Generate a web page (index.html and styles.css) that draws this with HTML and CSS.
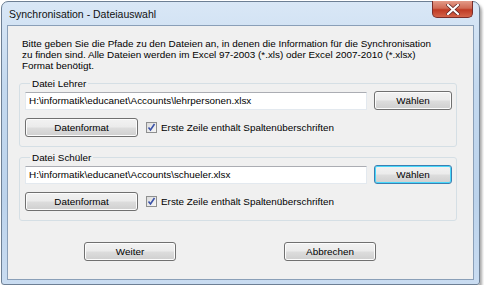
FILE: index.html
```
<!DOCTYPE html>
<html lang="de">
  <head>
    <meta charset="UTF-8">
    <link rel="stylesheet" href="styles.css">
    <title>Synchronisation - Dateiauswahl</title>
  </head>
  <body>
    <div class="window">
      <div class="titlebar">
        <span class="title">Synchronisation - Dateiauswahl</span>
        <span class="close">
          <svg width="14" height="11" viewBox="0 0 14 11">
            <path d="M2 1 L12 10 M12 1 L2 10" stroke="#5a2020" stroke-width="3.6" stroke-linecap="square"/>
            <path d="M2 1 L12 10 M12 1 L2 10" stroke="#fff" stroke-width="2.2" stroke-linecap="square"/>
          </svg>
        </span>
      </div>

      <div class="client">
        <p class="intro">
          Bitte geben Sie die Pfade zu den Dateien an, in denen die Information für die Synchronisation<br>
          zu finden sind. Alle Dateien werden im Excel 97-2003 (*.xls) oder Excel 2007-2010 (*.xlsx)<br>
          Format benötigt.
        </p>

        <fieldset class="group">
          <legend>Datei Lehrer</legend>
          <div class="row">
            <div class="field">H:\informatik\educanet\Accounts\lehrpersonen.xlsx</div>
            <button class="btn choose">Wählen</button>
          </div>
          <div class="row">
            <button class="btn format">Datenformat</button>
            <span class="check">
              <svg width="9" height="9" viewBox="0 0 9 9"><path d="M1.5 4.5 L3.5 7 L7.5 1" fill="none" stroke="#3a52a8" stroke-width="1.6"/></svg>
            </span>
            <span class="checklabel">Erste Zeile enthält Spaltenüberschriften</span>
          </div>
        </fieldset>

        <fieldset class="group second">
          <legend>Datei Schüler</legend>
          <div class="row">
            <div class="field">H:\informatik\educanet\Accounts\schueler.xlsx</div>
            <button class="btn choose focus">Wählen</button>
          </div>
          <div class="row">
            <button class="btn format">Datenformat</button>
            <span class="check">
              <svg width="9" height="9" viewBox="0 0 9 9"><path d="M1.5 4.5 L3.5 7 L7.5 1" fill="none" stroke="#3a52a8" stroke-width="1.6"/></svg>
            </span>
            <span class="checklabel">Erste Zeile enthält Spaltenüberschriften</span>
          </div>
        </fieldset>

        <div class="actions">
          <button class="btn wide">Weiter</button>
          <button class="btn wide cancel">Abbrechen</button>
        </div>
      </div>
    </div>
  </body>
</html>
```

FILE: styles.css
```
body {
  margin: 0;
  background: #fff;
  font-family: "Liberation Sans", Arial, sans-serif;
  font-size: 9.9px;
  color: #000;
}

.window {
  margin: 1px 0 0 1px;
  width: 479px;
  height: 284px;
  box-sizing: border-box;
  display: flex;
  flex-direction: column;
  padding: 0 5px 4px 5px;
  border: 1px solid #6d7f94;
  border-radius: 7px 7px 3px 3px;
  background: linear-gradient(180deg, #d9e7f6 0%, #c4d9ef 30%, #bcd3ec 70%, #c9dcf1 100%);
  box-shadow: 2px 3px 3px rgba(0, 0, 0, 0.35);
}

.titlebar {
  height: 23px;
  display: flex;
  justify-content: space-between;
  align-items: flex-start;
}

.title {
  margin: 6px 0 0 2px;
  font-size: 10.5px;
  color: #111;
}

.close {
  width: 41px;
  height: 17px;
  margin-top: -1px;
  margin-right: 1px;
  display: flex;
  align-items: center;
  justify-content: center;
  box-sizing: border-box;
  border: 1px solid #7a2d2a;
  border-top: none;
  border-radius: 0 0 5px 5px;
  background: linear-gradient(180deg, #e39a88 0%, #d06a55 45%, #bf3a24 55%, #d4644a 100%);
}

.client {
  flex: 1;
  background: #f0f0f0;
  border: 1px solid #8a9fb8;
  padding: 0 17px 0 11px;
}

.intro {
  margin: 12px 0 0 3px;
  line-height: 11px;
}

.group {
  margin: 7px 0 0 0;
  padding: 2px 4px 9px 5px;
  border: 1px solid #d5dfe5;
  border-radius: 3px;
}

.group.second {
  margin-top: 5px;
}

.group legend {
  padding: 0 2px;
  margin-left: 5px;
}

.row {
  display: flex;
  align-items: center;
}

.row + .row {
  margin-top: 8px;
}

.field {
  width: 342px;
  height: 18px;
  box-sizing: border-box;
  background: #fff;
  border: 1px solid #e3e9ef;
  border-top-color: #abadb3;
  padding: 0 3px;
  line-height: 16px;
  white-space: nowrap;
}

.btn {
  height: 19px;
  box-sizing: border-box;
  padding: 0;
  font-family: inherit;
  font-size: 9.9px;
  color: #000;
  border: 1px solid #707070;
  border-radius: 3px;
  background: linear-gradient(180deg, #f2f2f2 0%, #ebebeb 48%, #dddddd 52%, #cfcfcf 100%);
  box-shadow: inset 0 0 0 1px #fcfcfc;
}

.choose {
  width: 78px;
  margin-left: 7px;
}

.focus {
  border-color: #3c7fb1;
  box-shadow: inset 0 0 0 1px #48d8fb;
}

.format {
  width: 113px;
}

.check {
  width: 11px;
  height: 11px;
  box-sizing: border-box;
  margin-left: 8px;
  border: 1px solid #8e8f8f;
  background: linear-gradient(135deg, #dcdcdc, #f6f6f6);
  display: flex;
  align-items: center;
  justify-content: center;
}

.checklabel {
  margin-left: 4px;
}

.actions {
  display: flex;
  margin-top: 21px;
  padding-left: 65px;
}

.wide {
  width: 92px;
}

.cancel {
  margin-left: 108px;
}
```
